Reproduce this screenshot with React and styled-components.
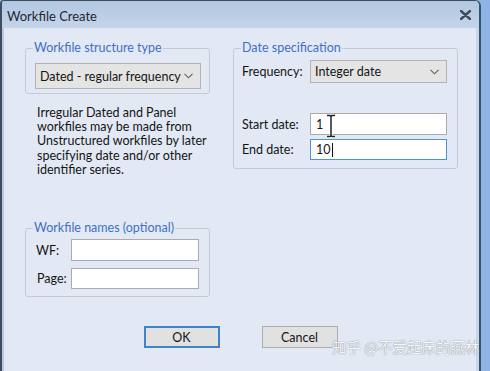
import React from "react";
import styled, { createGlobalStyle } from "styled-components";

const GlobalStyle = createGlobalStyle`
  html, body {
    margin: 0;
    padding: 0;
    background: #8fb3e4;
    overflow: hidden;
  }
  body {
    font-family: Lato, "Noto Sans", sans-serif;
  }
`;

const Window = styled.div`
  position: relative;
  width: 477px;
  height: 380px;
  border-left: 2px solid #3f4d60;
  border-right: 2px solid #2d5a66;
  border-top: 1px solid #3d4a5a;
  border-top-left-radius: 4px;
  border-top-right-radius: 6px;
  background: #e2e9f4;
  box-shadow: inset 2px 0 0 #b9c8dc, inset -3px 0 0 #c7d6ea;
  overflow: hidden;
`;

const TitleBar = styled.div`
  height: 27px;
  display: flex;
  align-items: center;
  justify-content: space-between;
  padding: 0 8px 0 5px;
  background: linear-gradient(#b3c7e1, #c4d4ea);
`;

const Title = styled.span`
  font-size: 13px;
  color: #1e2733;
  padding-top: 2px;
`;

const Client = styled.div`
  padding: 13px 0 0 23px;
`;

const Columns = styled.div`
  display: flex;
  gap: 23px;
  align-items: flex-start;
`;

const Column = styled.div`
  display: flex;
  flex-direction: column;
  width: ${(p) => p.$width}px;
`;

const Group = styled.fieldset`
  margin: ${(p) => p.$top || 0}px 0 0 0;
  box-sizing: border-box;
  width: 100%;
  border: 1px solid #c3cad3;
  border-radius: 3px;
  padding: ${(p) => p.$pad};
  min-width: 0;
`;

const Legend = styled.legend`
  padding: 0 1px;
  margin-left: ${(p) => p.$shift || 0}px;
  font-size: 12.5px;
  line-height: 14px;
  color: #3f70c4;
`;

const Select = styled.div`
  box-sizing: border-box;
  display: flex;
  align-items: center;
  justify-content: space-between;
  flex: 1;
  height: ${(p) => p.$h}px;
  padding: 0 7px 0 4px;
  background: #e4e4e4;
  border: 1px solid #b3b3b3;
  font-size: 12.5px;
  color: #151515;
`;

const Chevron = () => (
  <svg width="9" height="6" viewBox="0 0 9 6">
    <path d="M0.5 0.8 L4.5 4.8 L8.5 0.8" fill="none" stroke="#606060" strokeWidth="1.1" />
  </svg>
);

const Note = styled.p`
  margin: 12px 0 0 12px;
  font-size: 12.5px;
  line-height: 14.2px;
  color: #141414;
  white-space: nowrap;
`;

const Row = styled.div`
  display: flex;
  align-items: center;
  margin-top: ${(p) => p.$top || 0}px;
`;

const Label = styled.span`
  width: ${(p) => p.$w}px;
  flex: none;
  box-sizing: border-box;
  font-size: 12.5px;
  color: #141414;
  padding-left: ${(p) => p.$indent || 0}px;
`;

const Input = styled.div`
  position: relative;
  box-sizing: border-box;
  flex: 1;
  height: ${(p) => p.$h || 22}px;
  display: flex;
  align-items: center;
  padding-left: 5px;
  background: #fff;
  border: 1px solid ${(p) => (p.$focus ? "#4d92dc" : "#a9abaf")};
  font-size: 12.5px;
  color: #151515;
`;

const Caret = styled.span`
  display: inline-block;
  width: 1px;
  height: 14px;
  margin-left: 1px;
  background: #111;
`;

const Cursor = styled.svg`
  position: absolute;
  left: 14px;
  top: 0px;
`;

const Buttons = styled.div`
  display: flex;
  justify-content: center;
  gap: 42px;
  margin: 29px 0 0 -23px;
`;

const Button = styled.div`
  box-sizing: border-box;
  width: 76px;
  height: 22px;
  display: flex;
  align-items: center;
  justify-content: center;
  background: #e1e1e1;
  border: ${(p) => (p.$primary ? "2px solid #3f83cf" : "1px solid #adadad")};
  font-size: 12.5px;
  color: #151515;
`;

const Watermark = styled.div`
  position: absolute;
  left: 330px;
  top: 335px;
  white-space: nowrap;
  font-family: "Noto Sans CJK SC", sans-serif;
  font-size: 14.5px;
  color: #f4f6fa;
  text-shadow: 0 0 1px #8e949c, 0 0 1px #8e949c;
`;

const IBeam = () => {
  const d =
    "M2 1.5 H5 Q6 1.5 6 3 V21 Q6 22.5 5 22.5 H2 M10 1.5 H7 Q6 1.5 6 3 M6 21 Q6 22.5 7 22.5 H10";
  return (
    <Cursor width="12" height="24" viewBox="0 0 12 24">
      <path d={d} fill="none" stroke="#fff" strokeWidth="3" />
      <path d={d} fill="none" stroke="#222" strokeWidth="1.5" />
    </Cursor>
  );
};

export default function App() {
  return (
    <>
      <GlobalStyle />
      <Window>
        <TitleBar>
          <Title>Workfile Create</Title>
          <svg width="11" height="10" viewBox="0 0 11 10">
            <path d="M1 1 L10 9 M10 1 L1 9" stroke="#3f4a5a" strokeWidth="2.4" strokeLinecap="round" />
          </svg>
        </TitleBar>
        <Client>
          <Columns>
            <Column $width={185}>
              <Group $pad="8px 8px 4px 9px">
                <Legend $shift={-2}>Workfile structure type</Legend>
                <Row>
                  <Select $h={26}>
                    Dated - regular frequency <Chevron />
                  </Select>
                </Row>
              </Group>
              <Note>
                Irregular Dated and Panel
                <br />
                workfiles may be made from
                <br />
                Unstructured workfiles by later
                <br />
                specifying date and/or other
                <br />
                identifier series.
              </Note>
              <Group $pad="4px 10px 7px 10px" $top={44}>
                <Legend $shift={-3}>Workfile names (optional)</Legend>
                <Row>
                  <Label $w={35}>WF:</Label>
                  <Input />
                </Row>
                <Row $top={7}>
                  <Label $w={35} $indent={1}>
                    Page:
                  </Label>
                  <Input $h={21} />
                </Row>
              </Group>
            </Column>
            <Column $width={225}>
              <Group $pad="5px 10px 8px 8px">
                <Legend $shift={-1}>Date specification</Legend>
                <Row>
                  <Label $w={68}>Frequency:</Label>
                  <Select $h={23}>
                    Integer date <Chevron />
                  </Select>
                </Row>
                <Row $top={30}>
                  <Label $w={68}>Start date:</Label>
                  <Input>
                    1
                    <IBeam />
                  </Input>
                </Row>
                <Row $top={4}>
                  <Label $w={68}>End date:</Label>
                  <Input $h={21} $focus>
                    10
                    <Caret />
                  </Input>
                </Row>
              </Group>
            </Column>
          </Columns>
          <Buttons>
            <Button $primary>OK</Button>
            <Button>Cancel</Button>
          </Buttons>
        </Client>
        <Watermark>知乎 @不爱起床的燕林</Watermark>
      </Window>
    </>
  );
}
